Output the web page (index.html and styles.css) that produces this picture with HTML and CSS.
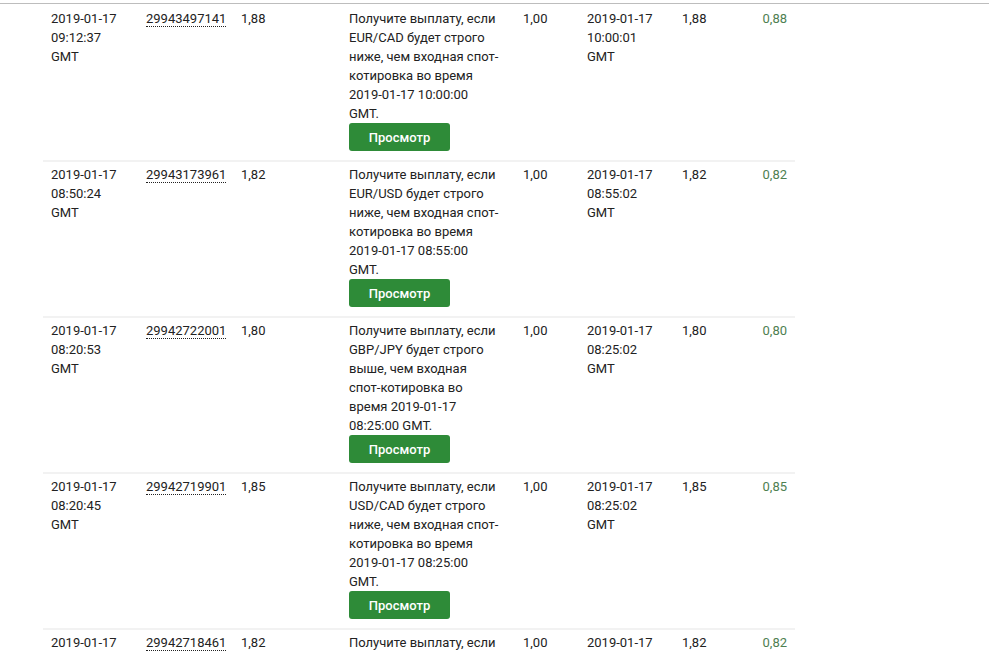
FILE: index.html
```html
<!DOCTYPE html>
<html lang="ru">
  <head>
    <meta charset="UTF-8" />
    <meta name="viewport" content="width=device-width, initial-scale=1.0" />
    <title>История контрактов</title>
    <link rel="stylesheet" href="styles.css">
  </head>
  <body>
    <div class="page">
      <table class="statement">
        <colgroup>
          <col class="c-date" />
          <col class="c-ref" />
          <col class="c-buy" />
          <col class="c-desc" />
          <col class="c-stake" />
          <col class="c-date" />
          <col class="c-sell" />
          <col class="c-profit" />
        </colgroup>
        <tbody>
          <tr>
            <td>2019-01-17 09:12:37 GMT</td>
            <td><span class="ref">29943497141</span></td>
            <td>1,88</td>
            <td>
              <div class="desc">Получите выплату, если EUR/CAD будет строго ниже, чем входная спот-котировка во время 2019-01-17 10:00:00 GMT.</div>
              <button class="view">Просмотр</button>
            </td>
            <td>1,00</td>
            <td>2019-01-17 10:00:01 GMT</td>
            <td>1,88</td>
            <td class="profit">0,88</td>
          </tr>
          <tr>
            <td>2019-01-17 08:50:24 GMT</td>
            <td><span class="ref">29943173961</span></td>
            <td>1,82</td>
            <td>
              <div class="desc">Получите выплату, если EUR/USD будет строго ниже, чем входная спот-котировка во время 2019-01-17 08:55:00 GMT.</div>
              <button class="view">Просмотр</button>
            </td>
            <td>1,00</td>
            <td>2019-01-17 08:55:02 GMT</td>
            <td>1,82</td>
            <td class="profit">0,82</td>
          </tr>
          <tr>
            <td>2019-01-17 08:20:53 GMT</td>
            <td><span class="ref">29942722001</span></td>
            <td>1,80</td>
            <td>
              <div class="desc">Получите выплату, если GBP/JPY будет строго выше, чем входная спот-котировка во время 2019-01-17 08:25:00 GMT.</div>
              <button class="view">Просмотр</button>
            </td>
            <td>1,00</td>
            <td>2019-01-17 08:25:02 GMT</td>
            <td>1,80</td>
            <td class="profit">0,80</td>
          </tr>
          <tr>
            <td>2019-01-17 08:20:45 GMT</td>
            <td><span class="ref">29942719901</span></td>
            <td>1,85</td>
            <td>
              <div class="desc">Получите выплату, если USD/CAD будет строго ниже, чем входная спот-котировка во время 2019-01-17 08:25:00 GMT.</div>
              <button class="view">Просмотр</button>
            </td>
            <td>1,00</td>
            <td>2019-01-17 08:25:02 GMT</td>
            <td>1,85</td>
            <td class="profit">0,85</td>
          </tr>
          <tr>
            <td>2019-01-17 08:20:41 GMT</td>
            <td><span class="ref">29942718461</span></td>
            <td>1,82</td>
            <td>
              <div class="desc">Получите выплату, если USD/JPY будет строго выше, чем входная спот-котировка во время 2019-01-17 08:25:00 GMT.</div>
              <button class="view">Просмотр</button>
            </td>
            <td>1,00</td>
            <td>2019-01-17 08:25:02 GMT</td>
            <td>1,82</td>
            <td class="profit">0,82</td>
          </tr>
        </tbody>
      </table>
    </div>
  </body>
</html>
```

FILE: styles.css
```css
body {
  font-family: Roboto, "Liberation Sans", Arial, sans-serif;
  font-size: 13px;
  line-height: 19px;
  color: #222;
  margin: 0;
  background: #fff;
}
.page {
  margin-top: 3px;
  border-top: 1px solid #bdbdbd;
  padding-left: 43px;
}
.statement {
  width: 752px;
  table-layout: fixed;
  border-collapse: collapse;
}
.c-date {
  width: 95px;
}
.c-ref {
  width: 95px;
}
.c-buy {
  width: 108px;
}
.c-desc {
  width: 174px;
}
.c-stake {
  width: 64px;
}
.c-sell {
  width: 66px;
}
.c-profit {
  width: 55px;
}
.statement tr {
  border-top: 2px solid #f2f2f2;
}
.statement tr:first-child {
  border-top-color: #fff;
}
.statement td {
  vertical-align: top;
  padding: 3px 8px 9px;
}
.ref {
  border-bottom: 1px dotted #222;
}
.desc {
  width: 150px;
}
.view {
  display: block;
  width: 101px;
  height: 28px;
  margin: 0;
  padding: 0;
  border: none;
  border-radius: 3px;
  background: #2e8b38;
  color: #fff;
  font-family: inherit;
  font-size: 13px;
  font-weight: 500;
  cursor: pointer;
}
.view:hover {
  background: #277a31;
}
.profit {
  text-align: right;
  color: #4e8051;
}
```
